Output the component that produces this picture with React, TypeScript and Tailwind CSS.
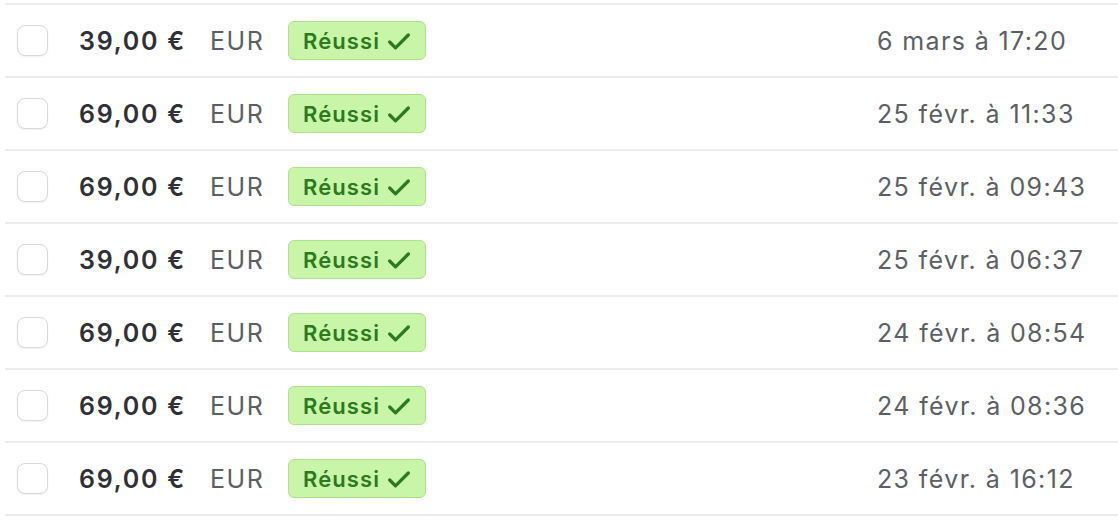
import { Check } from "lucide-react";

type Payment = {
  amount: string;
  date: string;
};

const payments: Payment[] = [
  { amount: "39,00 €", date: "6 mars à 17:20" },
  { amount: "69,00 €", date: "25 févr. à 11:33" },
  { amount: "69,00 €", date: "25 févr. à 09:43" },
  { amount: "39,00 €", date: "25 févr. à 06:37" },
  { amount: "69,00 €", date: "24 févr. à 08:54" },
  { amount: "69,00 €", date: "24 févr. à 08:36" },
  { amount: "69,00 €", date: "23 févr. à 16:12" },
];

export default function App() {
  return (
    <div className="h-[521px] w-[1118px] overflow-hidden bg-white pt-[3px] font-['Inter',sans-serif]">
      <div className="ml-[5px] border-b-2 border-[#ececec]">
        {payments.map((p, i) => (
          <div
            key={i}
            className="flex h-[73px] items-center border-t-2 border-[#ececec]"
          >
            <div className="ml-[12px] h-[31px] w-[31px] rounded-[8px] border border-[#d9d9dc] bg-white shadow-[0_1px_2px_rgba(0,0,0,0.06)]" />
            <span className="ml-[31px] w-[131px] pt-[2px] text-[25px] font-semibold tracking-[0.07em] text-[#2f3137]">
              {p.amount}
            </span>
            <span className="w-[78px] pt-[2px] text-[25px] tracking-[0.06em] text-[#5c5f66]">
              EUR
            </span>
            <span className="flex h-[39px] w-[138px] items-center gap-[5px] rounded-[6px] border border-[#a9e48c] bg-[#c8f5a8] pl-[14px] pt-[2px] text-[22px] font-semibold tracking-[0.05em] text-[#2b7a20]">
              Réussi
              <Check className="h-[28px] w-[28px]" strokeWidth={2.8} />
            </span>
            <span className="ml-auto w-[241px] pt-[2px] text-[25px] tracking-[0.055em] text-[#5c5f66]">
              {p.date}
            </span>
          </div>
        ))}
      </div>
    </div>
  );
}
